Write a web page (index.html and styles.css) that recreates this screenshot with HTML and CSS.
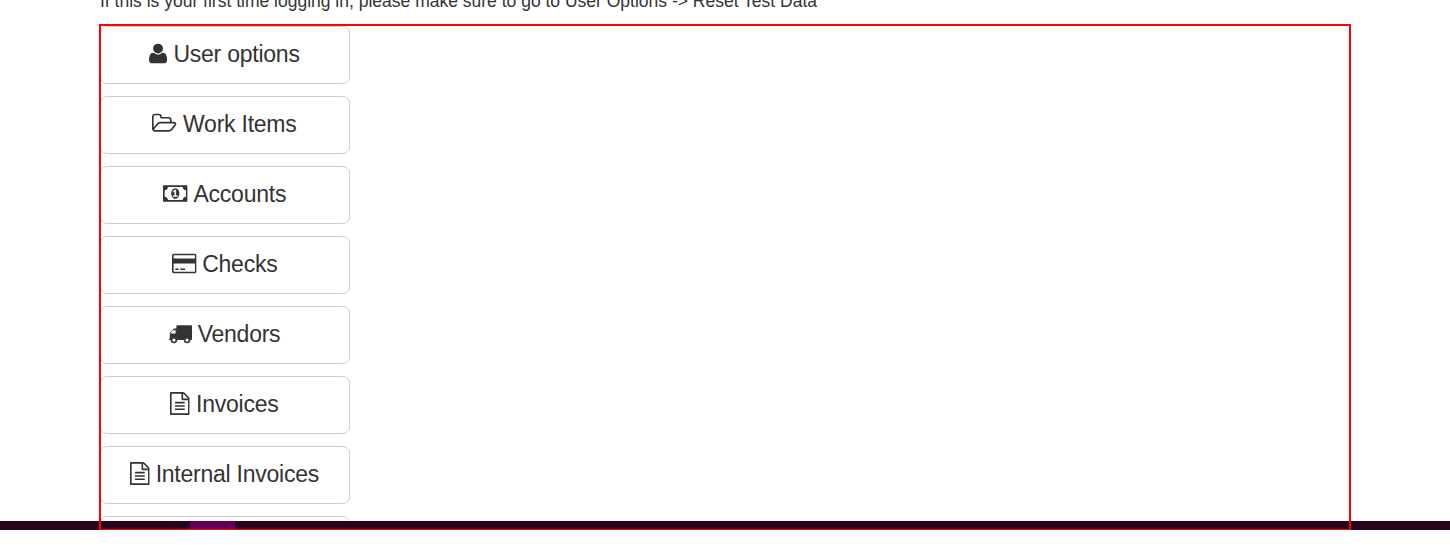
FILE: index.html
```html
<!DOCTYPE html>
<html lang="en">
<head>
<meta charset="utf-8">
<title>Home</title>
<link rel="stylesheet" href="styles.css">
</head>
<body>
<svg class="sprite" aria-hidden="true">
  <symbol id="user" viewBox="192 0 1408 1792"><path d="M1600 1405q0 120-73 189.500t-194 69.500h-874q-121 0-194-69.500t-73-189.500q0-53 3.500-103.500t14-109 26.500-108.500 43-97.500 62-81 85.500-53.500 111.500-20q9 0 42 21.500t74.500 48 108 48 133.500 21.500 133.500-21.500 108-48 74.500-48 42-21.500q61 0 111.500 20t85.500 53.500 62 81 43 97.500 26.500 108.500 14 109 3.500 103.500zm-320-893q0 159-112.500 271.500t-271.500 112.500-271.500-112.500-112.500-271.500 112.500-271.500 271.500-112.500 271.500 112.500 112.500 271.500z"/></symbol>
  <symbol id="folder" viewBox="-64 0 1920 1792"><path d="M1717 931q0-35-53-35h-1088q-40 0-85.500 21.500t-71.500 52.500l-294 363q-18 24-18 40 0 35 53 35h1088q40 0 86-22t71-53l294-363q18-22 18-39zm-1141-163h768v-160q0-40-28-68t-68-28h-576q-40 0-68-28t-28-68v-64q0-40-28-68t-68-28h-320q-40 0-68 28t-28 68v853l256-315q44-53 116-87.500t140-34.500zm1269 163q0 62-46 120l-295 363q-43 53-116 87.500t-140 34.500h-1088q-92 0-158-66t-66-158v-960q0-92 66-158t158-66h320q92 0 158 66t66 158v32h544q92 0 158 66t66 158v160h192q54 0 99 24.500t67 70.500q15 32 15 68z"/></symbol>
  <symbol id="money" viewBox="-64 0 1920 1792"><path d="M704 1152h384v-96h-128v-448h-114l-148 137 77 80q42-37 55-57h2v288h-128v96zm512-256q0 70-21 142t-59.500 134-101.500 101-138 39-138-39-101.500-101-59.500-134-21-142 21-142 59.500-134 101.500-101 138-39 138 39 101.500 101 59.500 134 21 142zm512 256v-512q-106 0-181-75t-75-181h-1152q0 106-75 181t-181 75v512q106 0 181 75t75 181h1152q0-106 75-181t181-75zm128-832v1152q0 26-19 45t-45 19h-1792q-26 0-45-19t-19-45v-1152q0-26 19-45t45-19h1792q26 0 45 19t19 45z"/></symbol>
  <symbol id="card" viewBox="0 0 1920 1792"><path fill-rule="evenodd" d="M160 128h1600q66 0 113 47t47 113v1216q0 66-47 113t-113 47h-1600q-66 0-113-47t-47-113v-1216q0-66 47-113t113-47zm0 128q-32 0-32 32v224h1664v-224q0-32-32-32zm-32 640v608q0 32 32 32h1600q32 0 32-32v-608zm128 384h256v128h-256zm384 0h384v128h-384z"/></symbol>
  <symbol id="truck" viewBox="64 0 1792 1792"><path fill-rule="evenodd" d="M192 896H576V640H418q-13 0-22 9L201 844q-9 9-9 22zM1856 320V1344q0 64-64 64H1728a256 256 0 0 1-512 0H704a256 256 0 0 1-512 0H128q-64 0-64-64t64-64V960q0-90 12-115 9-30 30-51L368 596Q419 512 477 512H640V320q0-64 64-64H1792q64 0 64 64zM576 1408a128 128 0 1 0-256 0a128 128 0 1 0 256 0zM1600 1408a128 128 0 1 0-256 0a128 128 0 1 0 256 0z"/></symbol>
  <symbol id="file" viewBox="128 0 1536 1792"><path d="M1596 380q28 28 48 76t20 88v1152q0 40-28 68t-68 28h-1344q-40 0-68-28t-28-68v-1600q0-40 28-68t68-28h896q40 0 88 20t76 48zm-444-244v376h376q-10-29-22-41l-313-313q-12-12-41-22zm384 1528v-1024h-416q-40 0-68-28t-28-68v-416h-768v1536h1280zm-1024-864q0-14 9-23t23-9h704q14 0 23 9t9 23v64q0 14-9 23t-23 9h-704q-14 0-23-9t-9-23v-64zm736 224q14 0 23 9t9 23v64q0 14-9 23t-23 9h-704q-14 0-23-9t-9-23v-64q0-14 9-23t23-9h704zm0 256q14 0 23 9t9 23v64q0 14-9 23t-23 9h-704q-14 0-23-9t-9-23v-64q0-14 9-23t23-9h704z"/></symbol>
</svg>
<div class="viewport">
  <main class="content">
    <p class="intro">If this is your first time logging in, please make sure to go to User Options -&gt; Reset Test Data</p>
    <nav class="menu">
      <a class="btn"><svg class="icon icon-user"><use href="#user"/></svg><span>User options</span></a>
      <a class="btn"><svg class="icon icon-wide"><use href="#folder"/></svg><span>Work Items</span></a>
      <a class="btn"><svg class="icon icon-wide"><use href="#money"/></svg><span>Accounts</span></a>
      <a class="btn"><svg class="icon icon-wide"><use href="#card"/></svg><span>Checks</span></a>
      <a class="btn"><svg class="icon icon-truck"><use href="#truck"/></svg><span>Vendors</span></a>
      <a class="btn"><svg class="icon icon-file"><use href="#file"/></svg><span>Invoices</span></a>
      <a class="btn"><svg class="icon icon-file"><use href="#file"/></svg><span>Internal Invoices</span></a>
      <a class="btn"></a>
    </nav>
  </main>
</div>
<footer class="taskbar"><div class="task"></div></footer>
<div class="frame"></div>
</body>
</html>
```
FILE: styles.css
```css
body {
  margin: 0;
  height: 555px;
  overflow: hidden;
  background: #fff;
  color: #333;
  font-family: "Liberation Sans", Arial, sans-serif;
}
.sprite { display: none; }
.viewport { height: 521px; overflow: hidden; }
.content { padding: 0 100px; }
.intro {
  margin: -9px 0 15px;
  height: 20px;
  line-height: 20px;
  font-size: 17.5px;
  white-space: nowrap;
}
.menu {
  display: flex;
  flex-direction: column;
  gap: 12px;
  width: 250px;
}
.btn {
  box-sizing: border-box;
  display: flex;
  flex: none;
  justify-content: center;
  align-items: center;
  gap: 6px;
  height: 58px;
  padding: 0 1px 3px 0;
  border: 1px solid #ccc;
  border-radius: 7px;
  font-size: 23px;
  line-height: 30px;
  letter-spacing: -0.24px;
  white-space: nowrap;
}
.icon { height: 23px; fill: #333; flex: none; overflow: visible; }
.icon-user { width: 18.1px; }
.icon-wide { width: 24.6px; }
.icon-truck { width: 23px; }
.icon-file { width: 19.7px; }
.taskbar { height: 9px; padding-left: 190px; background: #260420; }
.task { width: 45px; height: 9px; background: #600058; }
.frame {
  position: absolute;
  left: 99px;
  top: 24px;
  box-sizing: border-box;
  width: 1252px;
  height: 506px;
  border: 2px solid #f00;
  border-bottom-width: 1px;
}
```
